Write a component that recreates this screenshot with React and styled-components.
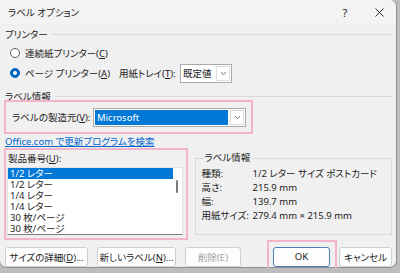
import React from 'react'
import styled, { createGlobalStyle } from 'styled-components'

const Global = createGlobalStyle`
  html, body {
    margin: 0;
    background: #bdbdbd;
  }
  body {
    font-family: "Noto Sans", "Noto Sans CJK JP", sans-serif;
    font-size: 9.5px;
    font-feature-settings: "palt";
    color: #1b1b1b;
  }
`

const Dialog = styled.div`
  width: 397px;
  height: 268px;
  box-sizing: border-box;
  background: #f0f0f0;
  border-right: 1px solid #8e8e8e;
  border-bottom: 1px solid #8e8e8e;
  border-radius: 0 7px 7px 7px;
  display: flex;
  flex-direction: column;
`

const TitleBar = styled.div`
  height: 24px;
  display: flex;
  align-items: center;
  padding-left: 8px;
  background: #f3f3f3;
  border-radius: 0 7px 0 0;
`

const Title = styled.div`
  flex: 1;
`

const TitleButton = styled.div`
  width: 34px;
  height: 24px;
  display: flex;
  align-items: center;
  justify-content: center;
  font-size: 11px;
`

const Body = styled.div`
  display: flex;
  flex-direction: column;
  padding: 0 4px;
`

const GroupHeader = styled.div`
  height: 8px;
  margin-top: ${p => p.$top}px;
  display: flex;
  align-items: center;
  gap: 4px;
  padding-left: 1px;
  white-space: nowrap;
  &::after {
    content: '';
    flex: 1;
    border-top: 1px solid #dadada;
  }
`

const Row = styled.div`
  height: 20px;
  display: flex;
  align-items: center;
  padding-left: 6px;
  margin-top: ${p => p.$top || 0}px;
`

const Radio = styled.label`
  display: flex;
  align-items: center;
  gap: 5px;
  width: 109px;
  white-space: nowrap;
`

const RadioDot = styled.span`
  width: 10px;
  height: 10px;
  flex-shrink: 0;
  box-sizing: border-box;
  border-radius: 50%;
  border: 1px solid ${p => (p.$on ? '#0067c0' : '#5a5a5a')};
  background: ${p => (p.$on ? '#0067c0' : '#fff')};
  display: flex;
  align-items: center;
  justify-content: center;
  &::after {
    content: '';
    width: 4px;
    height: 4px;
    border-radius: 50%;
    background: ${p => (p.$on ? '#fff' : 'transparent')};
  }
`

const FieldLabel = styled.span`
  width: ${p => p.$w}px;
  white-space: nowrap;
`

const Select = styled.div`
  width: ${p => p.$w}px;
  height: 19px;
  box-sizing: border-box;
  border: 1px solid #a9a9a9;
  background: #fff;
  display: flex;
  align-items: stretch;
`

const SelectValue = styled.div`
  flex: 1;
  display: flex;
  align-items: center;
  padding-left: 2px;
  margin: ${p => (p.$active ? '1px' : '0')};
  background: ${p => (p.$active ? '#0078d7' : 'transparent')};
  color: ${p => (p.$active ? '#fff' : 'inherit')};
`

const Chevron = styled.div`
  width: 12px;
  display: flex;
  align-items: center;
  justify-content: center;
  border: 1px solid #dcdcdc;
  margin: 1px;
  background: #fff;
`

const Highlight = styled.div`
  box-sizing: border-box;
  border: 2px solid #f4b4c8;
`

const MakerBox = styled(Highlight)`
  width: 249px;
  height: 34px;
  display: flex;
  align-items: center;
  padding-left: 6px;
`

const Link = styled.a`
  height: 14px;
  display: flex;
  align-items: center;
  padding-left: 1px;
  color: #0066cc;
  text-decoration: underline;
  white-space: nowrap;
`

const Lower = styled.div`
  display: flex;
  align-items: flex-start;
`

const ProductBox = styled(Highlight)`
  width: 184px;
  height: 92px;
  padding: 2px 3px 0 1px;
  display: flex;
  flex-direction: column;
`

const ProductLabel = styled.div`
  height: 12px;
  display: flex;
  align-items: center;
  padding-left: 1px;
`

const List = styled.div`
  margin-top: 3px;
  height: 68px;
  box-sizing: border-box;
  background: #fff;
  border: 1px solid #e2e2e2;
  border-bottom: 1px solid #7a7a7a;
  display: flex;
  overflow: hidden;
`

const Items = styled.div`
  flex: 1;
  display: flex;
  flex-direction: column;
`

const Item = styled.div`
  height: 11px;
  line-height: 11px;
  flex-shrink: 0;
  padding-left: 2px;
  background: ${p => (p.$sel ? '#0078d7' : 'transparent')};
  color: ${p => (p.$sel ? '#fff' : 'inherit')};
  white-space: nowrap;
`

const ScrollTrack = styled.div`
  width: 9px;
  display: flex;
  justify-content: center;
`

const Thumb = styled.div`
  width: 2px;
  height: 13px;
  margin-top: 12px;
  border-radius: 1px;
  background: #7c7c7c;
`

const InfoGroup = styled.fieldset`
  margin: 4px 0 0 7px;
  width: 198px;
  height: 83px;
  box-sizing: border-box;
  border: 1px solid #dadada;
  padding: 2px 0 0 6px;
  min-width: 0;
`

const Legend = styled.legend`
  padding: 0 1px;
  margin-left: 2px;
  line-height: 12px;
`

const InfoRow = styled.div`
  height: 14px;
  display: flex;
  align-items: center;
  white-space: nowrap;
`

const InfoKey = styled.span`
  width: 51px;
`

const Buttons = styled.div`
  display: flex;
  align-items: center;
  height: 33px;
  padding-left: 1px;
  gap: 9px;
`

const Button = styled.div`
  width: ${p => p.$w}px;
  height: 20px;
  box-sizing: border-box;
  border: 1px solid ${p => (p.$primary ? '#4a7fb5' : '#cfcfcf')};
  border-radius: 3px;
  background: #fdfdfd;
  color: ${p => (p.$disabled ? '#a0a0a0' : 'inherit')};
  display: flex;
  align-items: center;
  justify-content: center;
  white-space: nowrap;
`

const OkBox = styled(Highlight)`
  width: 70px;
  height: 33px;
  margin-left: auto;
  display: flex;
  align-items: center;
  padding-left: 4px;
`

const Cancel = styled(Button)`
  margin-left: -7px;
`

const ChevronIcon = () => (
  <svg width="7" height="5" viewBox="0 0 7 5">
    <path d="M1 1.2 L3.5 3.6 L6 1.2" fill="none" stroke="#606060" strokeWidth="0.9" />
  </svg>
)

const CloseIcon = () => (
  <svg width="9" height="9" viewBox="0 0 9 9">
    <path d="M0.5 0.5 L8.5 8.5 M8.5 0.5 L0.5 8.5" stroke="#333" strokeWidth="1" />
  </svg>
)

const items = ['1/2 レター', '1/2 レター', '1/4 レター', '1/4 レター', '30 枚/ページ', '30 枚/ページ']

const info = [
  ['種類:', '1/2 レター サイズ ポストカード'],
  ['高さ:', '215.9 mm'],
  ['幅:', '139.7 mm'],
  ['用紙サイズ:', '279.4 mm × 215.9 mm'],
]

export default function App() {
  return (
    <>
      <Global />
      <Dialog>
        <TitleBar>
          <Title>ラベル オプション</Title>
          <TitleButton>?</TitleButton>
          <TitleButton><CloseIcon /></TitleButton>
        </TitleBar>
        <Body>
          <GroupHeader $top={6}>プリンター</GroupHeader>
          <Row $top={5}>
            <Radio><RadioDot /><span>連続紙プリンター(<u>C</u>)</span></Radio>
          </Row>
          <Row>
            <Radio><RadioDot $on /><span>ページ プリンター(<u>A</u>)</span></Radio>
            <FieldLabel $w={61}>用紙トレイ(<u>T</u>):</FieldLabel>
            <Select $w={52}>
              <SelectValue>既定値</SelectValue>
              <Chevron><ChevronIcon /></Chevron>
            </Select>
          </Row>
          <GroupHeader $top={9}>ラベル情報</GroupHeader>
          <MakerBox>
            <FieldLabel $w={81}>ラベルの製造元(<u>V</u>):</FieldLabel>
            <Select $w={153}>
              <SelectValue $active>Microsoft</SelectValue>
              <Chevron><ChevronIcon /></Chevron>
            </Select>
          </MakerBox>
          <Link>Office.com で更新プログラムを検索</Link>
          <Lower>
            <ProductBox>
              <ProductLabel><span>製品番号(<u>U</u>):</span></ProductLabel>
              <List>
                <Items>
                  {items.map((t, i) => (
                    <Item key={i} $sel={i === 0}>{t}</Item>
                  ))}
                </Items>
                <ScrollTrack><Thumb /></ScrollTrack>
              </List>
            </ProductBox>
            <InfoGroup>
              <Legend>ラベル情報</Legend>
              {info.map(([k, v]) => (
                <InfoRow key={k}>
                  <InfoKey>{k}</InfoKey>
                  <span>{v}</span>
                </InfoRow>
              ))}
            </InfoGroup>
          </Lower>
          <Buttons>
            <Button $w={83}><span>サイズの詳細(<u>D</u>)...</span></Button>
            <Button $w={79}><span>新しいラベル(<u>N</u>)...</span></Button>
            <Button $w={56} $disabled>削除(E)</Button>
            <OkBox>
              <Button $w={57} $primary>OK</Button>
            </OkBox>
            <Cancel $w={53}>キャンセル</Cancel>
          </Buttons>
        </Body>
      </Dialog>
    </>
  )
}
